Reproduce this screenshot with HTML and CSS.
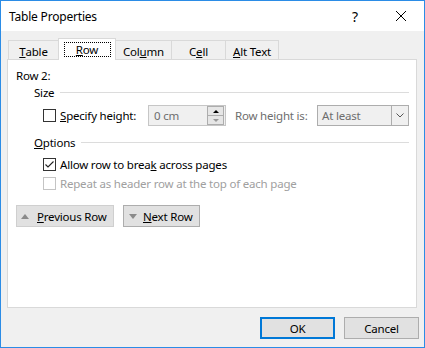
FILE: index.html
```html
<!DOCTYPE html>
<html lang="en">
<head>
    <meta charset="UTF-8">
    <title>Table Properties</title>
    <link rel="stylesheet" href="styles.css">
</head>
<body>
    <div class="dialog">
        <div class="titlebar">
            <span class="title">Table Properties</span>
            <span class="cap-btn help">?</span>
            <span class="cap-btn">
                <svg class="close-icon" viewBox="0 0 10 10" fill="none" stroke="#000" stroke-width="1">
                    <path d="M0 0 L10 10 M10 0 L0 10"></path>
                </svg>
            </span>
        </div>

        <div class="content">
            <div class="tabs">
                <div class="tab tab-table"><u>T</u>able</div>
                <div class="tab tab-row active"><span class="focus"><u>R</u>ow</span></div>
                <div class="tab tab-column">Col<u>u</u>mn</div>
                <div class="tab tab-cell">C<u>e</u>ll</div>
                <div class="tab tab-alt"><u>A</u>lt Text</div>
            </div>

            <div class="panel">
                <div class="row-label">Row 2:</div>

                <div class="group-head">
                    <span>Size</span>
                    <span class="rule"></span>
                </div>

                <div class="size-row">
                    <span class="check"></span>
                    <span class="label-spec"><u>S</u>pecify height:</span>
                    <div class="spin">
                        <span class="spin-value">0 cm</span>
                        <span class="spin-btns">
                            <span class="spin-up"></span>
                            <span class="spin-down"></span>
                        </span>
                    </div>
                    <span class="label-muted">Row height is:</span>
                    <div class="select">
                        <span class="select-value">At least</span>
                        <span class="select-arrow">
                            <svg viewBox="0 0 8 5" width="8" height="5" fill="none" stroke="#555" stroke-width="1">
                                <path d="M0.5 0.5 L4 4 L7.5 0.5"></path>
                            </svg>
                        </span>
                    </div>
                </div>

                <div class="group-head options-head">
                    <span><u>O</u>ptions</span>
                    <span class="rule"></span>
                </div>

                <div class="option option-first">
                    <span class="check">
                        <svg viewBox="0 0 11 11" width="11" height="11" fill="none" stroke="#222" stroke-width="1.1">
                            <path d="M1.5 5.5 L4 8 L9.5 2.5"></path>
                        </svg>
                    </span>
                    <span>Allow row to brea<u>k</u> across pages</span>
                </div>

                <div class="option disabled">
                    <span class="check"></span>
                    <span>Repeat as header row at the top of each page</span>
                </div>

                <div class="nav-row">
                    <div class="btn btn-prev">
                        <span class="tri tri-up"></span>
                        <span><u>P</u>revious Row</span>
                    </div>
                    <div class="btn btn-next">
                        <span class="tri tri-down"></span>
                        <span><u>N</u>ext Row</span>
                    </div>
                </div>
            </div>

            <div class="footer">
                <div class="btn btn-ok">OK</div>
                <div class="btn btn-cancel">Cancel</div>
            </div>
        </div>
    </div>
</body>
</html>
```

FILE: styles.css
```css
:root {
    --accent: #2b8ce6;
    --face: #f0f0f0;
    --line: #d9d9d9;
    --btn-bg: #e1e1e1;
    --btn-border: #adadad;
    --muted: #6d6d6d;
}

* {
    margin: 0;
    padding: 0;
    box-sizing: border-box;
}

body {
    font-family: 'Noto Sans', sans-serif;
    font-size: 11.5px;
    letter-spacing: -0.2px;
    color: #000;
    background: #fff;
}

u {
    text-decoration: underline;
    text-underline-offset: 1px;
}

.dialog {
    width: 425px;
    height: 348px;
    border: 1px solid var(--accent);
    background: var(--face);
    display: flex;
    flex-direction: column;
}

.titlebar {
    height: 30px;
    background: #fff;
    display: flex;
    align-items: center;
}

.title {
    flex: 1;
    padding-left: 8px;
    font-size: 12px;
}

.cap-btn {
    width: 46px;
    height: 30px;
    display: flex;
    align-items: center;
    justify-content: center;
}

.help {
    font-size: 14px;
}

.close-icon {
    width: 10px;
    height: 10px;
}

.content {
    padding: 7px 6px 0 6px;
}

/* tabs */
.tabs {
    height: 21px;
    padding-left: 2px;
    display: flex;
    align-items: flex-end;
}

.tab {
    height: 19px;
    border: 1px solid var(--line);
    border-bottom: none;
    margin-left: -1px;
    display: flex;
    justify-content: center;
    align-items: center;
    padding-top: 2px;
    background: var(--face);
}

.tab-table { width: 51px; }
.tab-row { width: 58px; }
.tab-column { width: 57px; }
.tab-cell { width: 55px; }
.tab-alt { width: 54px; }

.tab.active {
    height: 22px;
    margin-bottom: -1px;
    background: #fff;
    position: relative;
    z-index: 1;
    padding-top: 0;
}

.focus {
    width: 47px;
    height: 15px;
    border: 1px dotted #000;
    display: flex;
    justify-content: center;
    align-items: center;
}

/* panel */
.panel {
    width: 410px;
    height: 249px;
    background: #fff;
    border: 1px solid var(--line);
    padding: 0 7px 0 8px;
}

.row-label {
    margin-top: 8px;
    line-height: 16px;
}

.group-head {
    padding-left: 18px;
    height: 16px;
    display: flex;
    align-items: center;
    gap: 6px;
}

.rule {
    flex: 1;
    height: 1px;
    background: #dcdcdc;
}

.size-row {
    margin-top: 5px;
    height: 21px;
    padding-left: 27px;
    display: flex;
    align-items: center;
}

.check {
    width: 13px;
    height: 13px;
    border: 1px solid #333;
    background: #fff;
    display: flex;
    align-items: center;
    justify-content: center;
    flex-shrink: 0;
}

.label-spec {
    width: 92px;
    padding-left: 4px;
}

.spin {
    width: 78px;
    height: 21px;
    border: 1px solid #c6c6c6;
    background: var(--face);
    display: flex;
    align-items: center;
}

.spin-value {
    flex: 1;
    padding-left: 5px;
    color: var(--muted);
}

.spin-btns {
    width: 17px;
    height: 19px;
    display: flex;
    flex-direction: column;
    margin-right: 1px;
}

.spin-up,
.spin-down {
    flex: 1;
    border: 1px solid var(--btn-border);
    background: #e6e6e6;
    display: flex;
    align-items: center;
    justify-content: center;
}

.spin-down {
    border-top: none;
}

.spin-up::after {
    content: '';
    border-left: 3px solid transparent;
    border-right: 3px solid transparent;
    border-bottom: 3px solid #000;
}

.spin-down::after {
    content: '';
    border-left: 3px solid transparent;
    border-right: 3px solid transparent;
    border-top: 3px solid #999;
}

.label-muted {
    margin-left: 9px;
    color: var(--muted);
}

.select {
    margin-left: auto;
    width: 92px;
    height: 21px;
    border: 1px solid var(--btn-border);
    background: var(--face);
    display: flex;
}

.select-value {
    flex: 1;
    padding-left: 4px;
    line-height: 19px;
    color: var(--muted);
}

.select-arrow {
    width: 17px;
    border-left: 1px solid var(--btn-border);
    display: flex;
    align-items: center;
    justify-content: center;
}

.options-head {
    margin-top: 8px;
}

.option {
    height: 16px;
    margin-top: 3px;
    padding-left: 27px;
    display: flex;
    align-items: center;
    gap: 4px;
}

.option-first {
    margin-top: 6px;
}

.option.disabled {
    color: #a0a0a0;
}

.option.disabled .check {
    border-color: #c4c4c4;
}

/* buttons */
.nav-row {
    margin-top: 14px;
    display: flex;
    gap: 9px;
}

.btn {
    height: 22px;
    background: var(--btn-bg);
    border: 1px solid var(--btn-border);
    display: flex;
    align-items: center;
}

.btn-prev {
    width: 98px;
    border-color: #cfcfcf;
    padding-left: 4px;
    gap: 8px;
}

.btn-next {
    width: 77px;
    padding-left: 5px;
    gap: 6px;
}

.tri {
    width: 0;
    height: 0;
    border-left: 4px solid transparent;
    border-right: 4px solid transparent;
}

.tri-up {
    border-bottom: 5px solid #8a8a8a;
}

.tri-down {
    border-top: 5px solid #8a8a8a;
}

.footer {
    margin-top: 9px;
    display: flex;
    justify-content: flex-end;
    gap: 9px;
    margin-right: -1px;
}

.btn-ok,
.btn-cancel {
    width: 75px;
    justify-content: center;
}

.btn-ok {
    border: 2px solid #0078d7;
}
```
